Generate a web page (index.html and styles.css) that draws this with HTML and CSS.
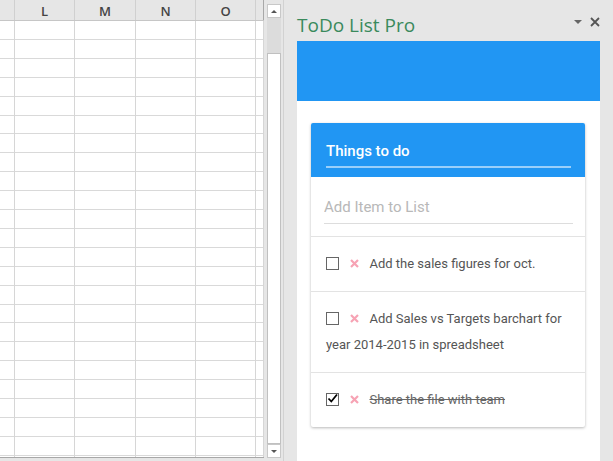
FILE: index.html
```html
<!DOCTYPE html>
<html lang="en">
<head>
<meta charset="UTF-8">
<meta name="viewport" content="width=device-width, initial-scale=1.0">
<title>ToDo List Pro</title>
<link rel="stylesheet" href="styles.css">
</head>
<body>

<div class="sheet">
    <div class="grid">
        <div class="grid-head">
            <div class="hcell w0"></div>
            <div class="hcell w1">L</div>
            <div class="hcell w2">M</div>
            <div class="hcell w1">N</div>
            <div class="hcell w1">O</div>
            <div class="hcell w5"></div>
        </div>
        <div class="grid-body">
            <div class="col w0"></div>
            <div class="col w1"></div>
            <div class="col w2"></div>
            <div class="col w1"></div>
            <div class="col w1"></div>
            <div class="col w5"></div>
        </div>
    </div>
    <div class="vscroll">
        <div class="sb-btn"><span class="tri-up"></span></div>
        <div class="sb-track"></div>
        <div class="sb-thumb"></div>
        <div class="sb-btn"><span class="tri-down"></span></div>
    </div>
</div>

<div class="panel">
    <div class="panel-top">
        <h1>ToDo List Pro</h1>
        <div class="panel-ctrl">
            <span class="tri-menu"></span>
            <svg width="10" height="10" viewBox="0 0 10 10"><path d="M1 1 L9 9 M9 1 L1 9" stroke="#555" stroke-width="1.8"/></svg>
        </div>
    </div>
    <div class="banner"></div>
    <div class="pane">
        <div class="card">
            <div class="card-head">
                <div class="card-title">Things to do</div>
            </div>
            <div class="add-row">
                <input type="text" class="add-input" placeholder="Add Item to List">
            </div>
            <ul class="todo-list">
                <li class="todo">
                    <span class="box"></span>
                    <svg class="del" width="9" height="9" viewBox="0 0 9 9"><path d="M1 1 L8 8 M8 1 L1 8" stroke="#f7a3b4" stroke-width="2.2"/></svg>
                    Add the sales figures for oct.
                </li>
                <li class="todo">
                    <span class="box"></span>
                    <svg class="del" width="9" height="9" viewBox="0 0 9 9"><path d="M1 1 L8 8 M8 1 L1 8" stroke="#f7a3b4" stroke-width="2.2"/></svg>
                    Add Sales vs Targets barchart for year 2014-2015 in spreadsheet
                </li>
                <li class="todo done">
                    <span class="box">
                        <svg width="11" height="11" viewBox="0 0 11 11"><path d="M1.5 5.5 L4.3 8.5 L10 1.5" fill="none" stroke="#000" stroke-width="1.8"/></svg>
                    </span>
                    <svg class="del" width="9" height="9" viewBox="0 0 9 9"><path d="M1 1 L8 8 M8 1 L1 8" stroke="#f7a3b4" stroke-width="2.2"/></svg>
                    <s>Share the file with team</s>
                </li>
            </ul>
        </div>
    </div>
</div>

</body>
</html>
```

FILE: styles.css
```css
body {
    margin: 0;
    height: 461px;
    overflow: hidden;
    display: flex;
    background: #e6e6e6;
    font-family: Roboto, "Liberation Sans", sans-serif;
}

/* spreadsheet */
.sheet {
    width: 283px;
    display: flex;
    flex-shrink: 0;
}
.grid {
    width: 264px;
    display: flex;
    flex-direction: column;
    height: 458px;
}
.grid-head {
    display: flex;
    height: 20px;
    border-bottom: 1px solid #c6c6c6;
}
.hcell {
    border-right: 1px solid #d0d0d0;
    font-family: "Open Sans", sans-serif;
    font-weight: 600;
    font-size: 13px;
    line-height: 22px;
    color: #444;
    text-align: center;
}
.w0 { width: 14px; }
.w1 { width: 59px; }
.w2 { width: 60px; }
.w5 { width: 7px; border-right: 1px solid #a8a8a8; }
.grid-body {
    flex: 1;
    display: flex;
    background: repeating-linear-gradient(to bottom, #fff 0, #fff 17.9px, #d9d9d9 17.9px, #d9d9d9 18.9px);
    border-bottom: 1px solid #a8a8a8;
}
.col {
    border-right: 1px solid #d6d6d6;
}
.vscroll {
    width: 14px;
    margin: 4px 0 0 3px;
    height: 454px;
    display: flex;
    flex-direction: column;
}
.sb-btn {
    height: 12px;
    background: #fff;
    border: 1px solid #c8c8c8;
    display: flex;
    align-items: center;
    justify-content: center;
}
.tri-up, .tri-down {
    width: 0;
    height: 0;
    border-left: 3px solid transparent;
    border-right: 3px solid transparent;
}
.tri-up { border-bottom: 3px solid #555; }
.tri-down { border-top: 3px solid #555; }
.sb-track {
    height: 35px;
    background: #dcdcdc;
}
.sb-thumb {
    flex: 1;
    background: #fff;
    border: 1px solid #c0c0c0;
}

/* task pane */
.panel {
    flex: 1;
    border-left: 1px solid #d2d2d2;
    padding: 0 13px 0 13px;
    display: flex;
    flex-direction: column;
}
.panel-top {
    height: 41px;
    display: flex;
    justify-content: space-between;
}
h1 {
    margin: 12px 0 0;
    font-family: "Open Sans", sans-serif;
    font-weight: 400;
    font-size: 19px;
    line-height: 26px;
    color: #3a8a5c;
}
.panel-ctrl {
    display: flex;
    align-items: center;
    gap: 8px;
    height: 44px;
}
.tri-menu {
    width: 0;
    height: 0;
    border-left: 4px solid transparent;
    border-right: 4px solid transparent;
    border-top: 4px solid #666;
}
.banner {
    height: 60px;
    background: #2196f3;
}
.pane {
    flex: 1;
    background: #fff;
    padding: 22px 15px 0 14px;
}
.card {
    background: #fff;
    box-shadow: 0 1px 3px rgba(0, 0, 0, 0.28);
    border-radius: 2px;
}
.card-head {
    background: #2196f3;
    height: 54px;
    padding: 0 14px 0 15px;
    border-radius: 2px 2px 0 0;
}
.card-title {
    color: #fff;
    font-size: 15px;
    font-weight: 500;
    padding-top: 19px;
    padding-bottom: 6px;
    border-bottom: 2px solid rgba(255, 255, 255, 0.55);
}
.add-row {
    height: 59px;
    padding: 0 12px 0 13px;
}
.add-input {
    width: 100%;
    box-sizing: border-box;
    margin-top: 21px;
    border: none;
    border-bottom: 1px solid #ddd;
    padding: 0 0 7px;
    font-family: Roboto, sans-serif;
    font-size: 15px;
    outline: none;
}
.add-input::placeholder {
    color: #b8b8b8;
}
.todo-list {
    list-style: none;
    margin: 0;
    padding: 0;
}
.todo {
    border-top: 1px solid #e3e3e3;
    padding: 14px 14px 14px 15px;
    font-size: 13px;
    line-height: 26px;
    color: #555;
}
.box {
    display: inline-block;
    width: 11px;
    height: 11px;
    border: 1px solid #666;
    vertical-align: -2px;
    margin-right: 8px;
    position: relative;
}
.box svg {
    position: absolute;
    left: 0;
    top: -1px;
}
.del {
    vertical-align: 0;
    margin-right: 7px;
}
.done s {
    color: #666;
}
```
